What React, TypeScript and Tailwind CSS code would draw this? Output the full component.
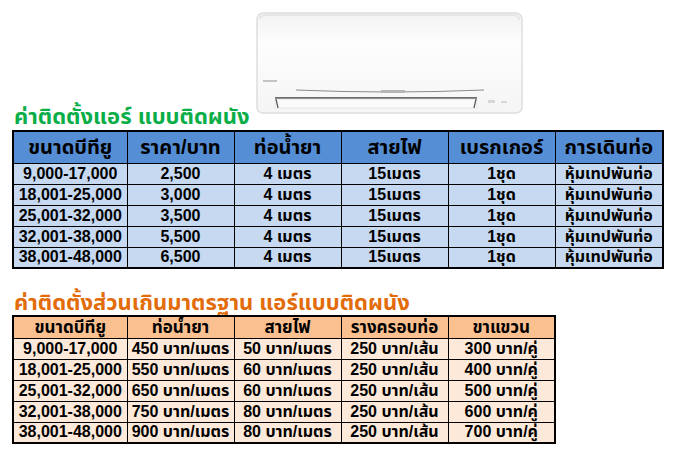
import React from 'react';

const FONT = '[font-family:"Liberation_Sans","Noto_Sans_Thai","Noto_Sans","DejaVu_Sans",sans-serif]';

const main = [
  ['9,000-17,000', '2,500'],
  ['18,001-25,000', '3,000'],
  ['25,001-32,000', '3,500'],
  ['32,001-38,000', '5,500'],
  ['38,001-48,000', '6,500'],
];

const extra = [
  ['9,000-17,000', '450', '50', '300'],
  ['18,001-25,000', '550', '60', '400'],
  ['25,001-32,000', '650', '60', '500'],
  ['32,001-38,000', '750', '80', '600'],
  ['38,001-48,000', '900', '80', '700'],
];

function AirCon() {
  return (
    <svg width={267} height={102} viewBox="0 0 267 102">
      <defs>
        <linearGradient id="body" x1="0" y1="0" x2="0" y2="1">
          <stop offset="0%" stopColor="#f2f2f2" />
          <stop offset="30%" stopColor="#fdfdfd" />
          <stop offset="100%" stopColor="#f5f5f5" />
        </linearGradient>
      </defs>
      <rect x={1} y={1} width={265} height={100} rx={6} fill="url(#body)" stroke="#dedede" strokeWidth={1.5} />
      <path d="M4 7 Q4 3 10 3 L257 3 Q263 3 263 8" fill="none" stroke="#e6e6e6" strokeWidth={2} />
      <path d="M40 78 Q133 82 228 78" fill="none" stroke="#8a8a8a" strokeWidth={1.2} />
      <rect x={125} y={78} width={24} height={3} fill="#b5b5b5" />
      <rect x={7} y={68} width={14} height={2} fill="#c4c4c4" />
      <rect x={19} y={85} width={202} height={2} fill="#6e6e6e" />
      <rect x={19} y={87} width={202} height={9} fill="#fafafa" stroke="#dcdcdc" strokeWidth={0.6} />
      <path d="M20 87 L22 96" stroke="#555" strokeWidth={1.2} />
      <path d="M220 87 L218 96" stroke="#555" strokeWidth={1.2} />
      <rect x={232} y={88} width={7} height={3} fill="#d7d7d7" />
      <rect x={245} y={89} width={6} height={2} fill="#d7d7d7" />
    </svg>
  );
}

export default function App() {
  const td1 = 'border border-black h-[21px] p-0 text-center text-[16px] font-bold leading-none text-black';
  const td2 = 'border border-black h-[21px] p-0 text-center text-[16px] font-bold leading-none text-black whitespace-nowrap';
  return (
    <div className={`w-[673px] h-[450px] bg-white overflow-hidden ${FONT}`}>
      {/* top: title + aircon picture */}
      <div className="flex h-[130px]">
        <div className="w-[245px] pl-[14px] flex items-end pb-[2px]">
          <h1 className="text-[22px] font-bold leading-none text-[#0aae48] whitespace-nowrap">ค่าติดตั้งแอร์ แบบติดผนัง</h1>
        </div>
        <div className="ml-[11px] mt-[12px]">
          <AirCon />
        </div>
      </div>

      <table className="ml-[12px] border-collapse border-2 border-black table-fixed">
        <colgroup>
          <col className="w-[114px]" />
          <col className="w-[107px]" />
          <col className="w-[107px]" />
          <col className="w-[107px]" />
          <col className="w-[107px]" />
          <col className="w-[108px]" />
        </colgroup>
        <thead>
          <tr className="bg-[#558ed5]">
            {['ขนาดบีทียู', 'ราคา/บาท', 'ท่อน้ำยา', 'สายไฟ', 'เบรกเกอร์', 'การเดินท่อ'].map((h) => (
              <th key={h} className="border border-black h-[32px] p-0 text-center text-[20px] font-bold text-black whitespace-nowrap">
                {h}
              </th>
            ))}
          </tr>
        </thead>
        <tbody>
          {main.map(([btu, price]) => (
            <tr key={btu} className="bg-[#c6d9f1]">
              <td className={td1}>{btu}</td>
              <td className={td1}>{price}</td>
              <td className={td1}>4 เมตร</td>
              <td className={td1}>15เมตร</td>
              <td className={td1}>1ชุด</td>
              <td className={`${td1} whitespace-nowrap`}>หุ้มเทปพันท่อ</td>
            </tr>
          ))}
        </tbody>
      </table>

      <h2 className="mt-[22px] ml-[14px] text-[22px] font-bold leading-[24px] text-[#e36c0a] whitespace-nowrap">
        ค่าติดตั้งส่วนเกินมาตรฐาน แอร์แบบติดผนัง
      </h2>

      <table className="ml-[12px] border-collapse border-2 border-black table-fixed">
        <colgroup>
          <col className="w-[114px]" />
          <col className="w-[107px]" />
          <col className="w-[107px]" />
          <col className="w-[107px]" />
          <col className="w-[107px]" />
        </colgroup>
        <thead>
          <tr className="bg-[#fac090]">
            {['ขนาดบีทียู', 'ท่อน้ำยา', 'สายไฟ', 'รางครอบท่อ', 'ขาแขวน'].map((h) => (
              <th key={h} className="border border-black h-[22px] p-0 text-center text-[17px] font-bold leading-none text-black whitespace-nowrap">
                {h}
              </th>
            ))}
          </tr>
        </thead>
        <tbody>
          {extra.map(([btu, pipe, wire, hang]) => (
            <tr key={btu} className="bg-[#fde9d9]">
              <td className={td2}>{btu}</td>
              <td className={td2}>{pipe} บาท/เมตร</td>
              <td className={td2}>{wire} บาท/เมตร</td>
              <td className={td2}>250 บาท/เส้น</td>
              <td className={td2}>{hang} บาท/คู่</td>
            </tr>
          ))}
        </tbody>
      </table>
    </div>
  );
}
